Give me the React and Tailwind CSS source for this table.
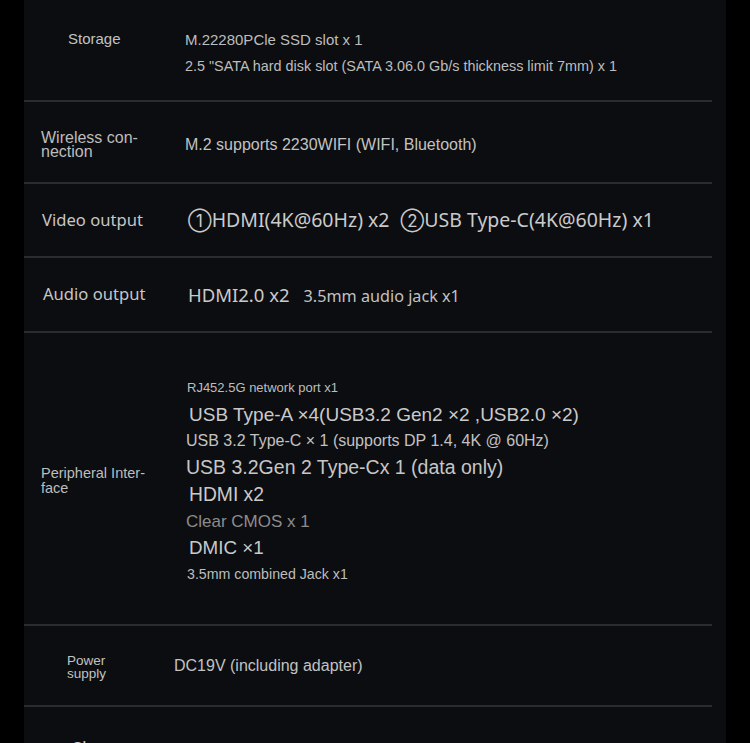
const arial = 'font-["Liberation_Sans",Arial,sans-serif]';
const noto = 'font-["Noto_Sans",Inter,sans-serif]';

const Row = ({ height, labelPad, label, labelClass, children, valuePad = 'pl-[161px]' }) => (
  <div className={`relative flex items-center border-b-2 border-[#2b2c2f] ${height}`}>
    <div className={`absolute left-0 top-0 flex h-full items-center ${labelPad}`}>
      <div className={labelClass}>{label}</div>
    </div>
    <div className={`flex flex-col ${valuePad}`}>{children}</div>
  </div>
);

const App = () => {
  return (
    <div className="min-h-[743px] overflow-hidden bg-black">
      <div className="mx-[24px] h-[743px] overflow-hidden bg-[#0c0d10] pr-[14px]">
        <Row
          height="h-[102px]"
          labelPad="pl-[44px] pb-[22px]"
          label="Storage"
          labelClass={`${arial} text-[15px] text-[#c2c2c2]`}
        >
          <div className={`${arial} pt-[5px] text-[15px] leading-[26px] text-[#bdbdbd]`}>M.22280PCle SSD slot x 1</div>
          <div className={`${arial} text-[14.4px] leading-[26px] text-[#bdbdbd]`}>
            2.5 "SATA hard disk slot (SATA 3.06.0 Gb/s thickness limit 7mm) x 1
          </div>
        </Row>

        <Row
          height="h-[82px]"
          labelPad="pl-[17px] pt-[5px]"
          label={<>Wireless con-<br />nection</>}
          labelClass={`${arial} text-[16px] leading-[14px] text-[#bdbdbd]`}
        >
          <div className={`${arial} pt-[6px] text-[16px] text-[#c2c2c2]`}>M.2 supports 2230WIFI (WIFI, Bluetooth)</div>
        </Row>

        <Row
          height="h-[74px]"
          labelPad="pl-[18px]"
          label="Video output"
          labelClass={`${noto} text-[16.6px] text-[#c6c6c6]`}
          valuePad="pl-[164px]"
        >
          <div className={`${noto} text-[19.5px] text-[#cacaca]`}>
            <span className="text-[17px]">①</span>HDMI(4K@60Hz) x2{' '}
            <span className="ml-[6px] text-[17px]">②</span>USB Type-C(4K@60Hz) x1
          </div>
        </Row>

        <Row
          height="h-[75px]"
          labelPad="pl-[19px]"
          label="Audio output"
          labelClass={`${noto} text-[16.6px] text-[#c6c6c6]`}
          valuePad="pl-[164px]"
        >
          <div className="flex items-baseline">
            <span className={`${noto} text-[18.5px] text-[#cacaca]`}>HDMI2.0 x2</span>
            <span className={`${noto} ml-[14px] text-[16.2px] text-[#c2c2c2]`}>3.5mm audio jack x1</span>
          </div>
        </Row>

        <Row
          height="h-[293px]"
          labelPad="pl-[17px] pt-[5px]"
          label={<>Peripheral Inter-<br />face</>}
          labelClass={`${arial} text-[14.5px] leading-[15px] text-[#bdbdbd]`}
          valuePad="pl-[162px] pt-[5px]"
        >
          <div className={`${arial} h-[27px] pl-[1px] text-[13px] leading-[27px] text-[#bdbdbd]`}>RJ452.5G network port x1</div>
          <div className={`${arial} h-[27px] pl-[3px] text-[19px] leading-[27px] text-[#cacaca]`}>
            USB Type-A ×4(USB3.2 Gen2 ×2 ,USB2.0 ×2)
          </div>
          <div className={`${arial} h-[26px] text-[16px] leading-[26px] text-[#c2c2c2]`}>
            USB 3.2 Type-C × 1 (supports DP 1.4, 4K @ 60Hz)
          </div>
          <div className={`${arial} h-[27px] text-[19.5px] leading-[27px] text-[#c6c6c6]`}>
            USB 3.2Gen 2 Type-Cx 1 (data only)
          </div>
          <div className={`${arial} h-[27px] pl-[3px] text-[19.3px] leading-[27px] text-[#cacaca]`}>HDMI x2</div>
          <div className={`${arial} h-[27px] text-[17px] leading-[27px] text-[#8c8c8c]`}>Clear CMOS x 1</div>
          <div className={`${arial} h-[26px] pl-[3px] text-[18.8px] leading-[26px] text-[#cacaca]`}>DMIC ×1</div>
          <div className={`${arial} h-[27px] pl-[1px] text-[14.2px] leading-[27px] text-[#bdbdbd]`}>3.5mm combined Jack x1</div>
        </Row>

        <Row
          height="h-[81px]"
          labelPad="pl-[43px] pt-[2px]"
          label={<>Power<br />supply</>}
          labelClass={`${arial} text-[13.5px] leading-[13px] text-[#c2c2c2]`}
          valuePad="pl-[150px]"
        >
          <div className={`${arial} text-[16px] text-[#c2c2c2]`}>DC19V (including adapter)</div>
        </Row>

        <div className="flex pl-[48px] pt-[28px]">
          <div className={`${noto} text-[18px] text-[#d0d0d0]`}>Size</div>
        </div>
      </div>
    </div>
  );
};

export default App;
